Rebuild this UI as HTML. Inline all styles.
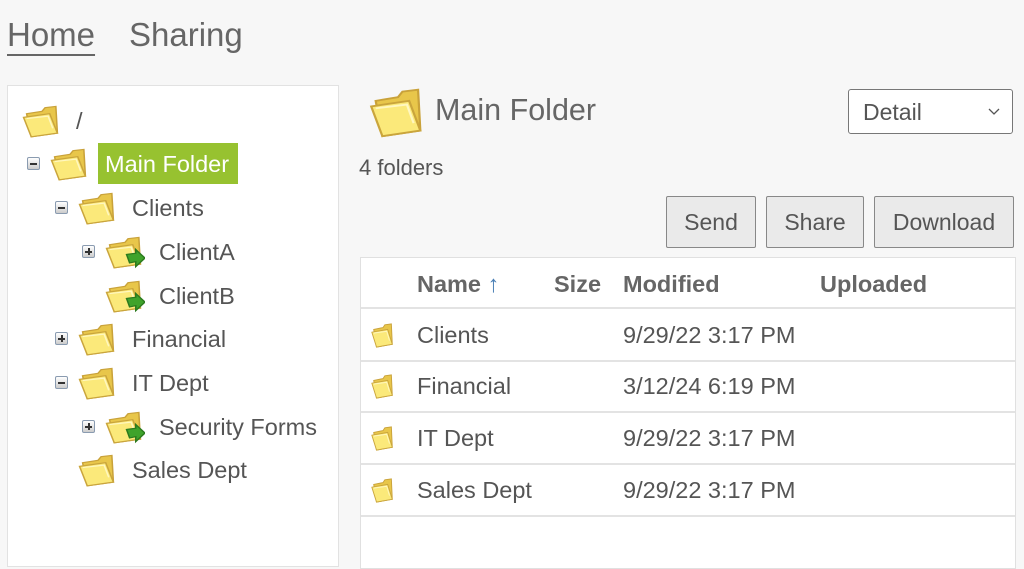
<!DOCTYPE html>
<html><head><style>
body{margin:0;width:1024px;height:557px;overflow:hidden;background:#f7f7f7;font-family:"Liberation Sans",sans-serif;color:#555;position:relative}
.a{position:absolute}
.nav{font-size:33px;color:#666;top:16px}
.tree{left:7px;top:85px;width:330px;height:480px;background:#fff;border:1px solid #e2e2e2}
.t{position:absolute;font-size:23.5px;color:#555}
.pm{position:absolute;width:11px;height:11px;border:1px solid #8a9bb0;background:linear-gradient(#fff,#ccc);border-radius:2px}
.pm:before{content:"";position:absolute;left:2px;top:5px;width:7px;height:2px;background:#333}
.pm.p:after{content:"";position:absolute;left:5px;top:2px;width:2px;height:7px;background:#333}
.btn{position:absolute;top:196px;height:52px;background:#eaeaea;border:1px solid #888;border-radius:2px;font-size:23px;color:#555;display:flex;align-items:center;justify-content:center;box-sizing:border-box}
.tbl{left:360px;top:257px;width:654px;height:310px;background:#fff;border:1px solid #e0e0e0}
.row{position:absolute;left:0;width:654px;height:51px;border-bottom:2px solid #e3e3e3;font-size:23.5px;color:#555}
.row span{position:absolute;top:13px}
</style></head><body>
<svg width="0" height="0" style="position:absolute"><defs>
<g id="f"><path d="M3 8 L13 6 L15 3 L22 2 L23 24 L6 27 Z" fill="#e8c64a" stroke="#c9a23a"/><path d="M1 11 L18 8 L23 24 L6 27 Z" fill="#fbe97a" stroke="#caa53c"/><path d="M3 12 L17 10 L20 20" fill="none" stroke="#fff7c0" stroke-width="1"/></g>
<g id="s"><path d="M14 16 L20 15 L20 12 L26 19 L20 26 L20 22 L16 23 Z" fill="#3fa32b" stroke="#2c7a1e"/></g>
</defs></svg>
<div class="a nav" style="left:7px;text-decoration:underline;text-decoration-thickness:2px;text-underline-offset:8px">Home</div>
<div class="a nav" style="left:129px">Sharing</div>

<div class="a tree">
<svg class="a" style="left:14px;top:18px" width="40" height="34" viewBox="0 0 26 28" preserveAspectRatio="none"><use href="#f"/></svg>
<div class="t" style="left:68px;top:22px">/</div>
<div class="pm" style="left:19px;top:71px"></div>
<svg class="a" style="left:42px;top:61px" width="40" height="34" viewBox="0 0 26 28" preserveAspectRatio="none"><use href="#f"/></svg>
<div class="a" style="left:90px;top:57px;width:140px;height:41px;background:#97c230"></div>
<div class="t" style="left:97px;top:65px;color:#fff">Main Folder</div>
<div class="pm" style="left:47px;top:115px"></div>
<svg class="a" style="left:70px;top:105px" width="40" height="34" viewBox="0 0 26 28" preserveAspectRatio="none"><use href="#f"/></svg>
<div class="t" style="left:124px;top:109px">Clients</div>
<div class="pm p" style="left:74px;top:159px"></div>
<svg class="a" style="left:97px;top:149px" width="40" height="34" viewBox="0 0 26 28" preserveAspectRatio="none"><use href="#f"/><use href="#s"/></svg>
<div class="t" style="left:151px;top:153px">ClientA</div>
<svg class="a" style="left:97px;top:193px" width="40" height="34" viewBox="0 0 26 28" preserveAspectRatio="none"><use href="#f"/><use href="#s"/></svg>
<div class="t" style="left:151px;top:197px">ClientB</div>
<div class="pm p" style="left:47px;top:246px"></div>
<svg class="a" style="left:70px;top:236px" width="40" height="34" viewBox="0 0 26 28" preserveAspectRatio="none"><use href="#f"/></svg>
<div class="t" style="left:124px;top:240px">Financial</div>
<div class="pm" style="left:47px;top:290px"></div>
<svg class="a" style="left:70px;top:280px" width="40" height="34" viewBox="0 0 26 28" preserveAspectRatio="none"><use href="#f"/></svg>
<div class="t" style="left:124px;top:284px">IT Dept</div>
<div class="pm p" style="left:74px;top:334px"></div>
<svg class="a" style="left:97px;top:324px" width="40" height="34" viewBox="0 0 26 28" preserveAspectRatio="none"><use href="#f"/><use href="#s"/></svg>
<div class="t" style="left:151px;top:328px">Security Forms</div>
<svg class="a" style="left:70px;top:367px" width="40" height="34" viewBox="0 0 26 28" preserveAspectRatio="none"><use href="#f"/></svg>
<div class="t" style="left:124px;top:371px">Sales Dept</div>
</div>

<svg class="a" style="left:369px;top:86px" width="58" height="52" viewBox="0 0 26 28" preserveAspectRatio="none"><use href="#f"/></svg>
<div class="a" style="left:435px;top:93px;font-size:30.5px;color:#666">Main Folder</div>
<div class="a" style="left:848px;top:89px;width:165px;height:45px;background:#fff;border:1px solid #777;border-radius:3px;box-sizing:border-box;font-size:23px;color:#555;padding:9px 14px">Detail<svg class="a" style="right:12px;top:18px" width="12" height="8" viewBox="0 0 12 8"><path d="M1 1 L6 6 L11 1" fill="none" stroke="#555" stroke-width="1.3"/></svg></div>
<div class="a" style="left:359px;top:155px;font-size:22px;color:#555">4 folders</div>
<div class="btn" style="left:666px;width:90px">Send</div>
<div class="btn" style="left:766px;width:98px">Share</div>
<div class="btn" style="left:874px;width:140px">Download</div>

<div class="a tbl">
<div class="row" style="top:0;height:49px;font-weight:bold;color:#666"><span style="left:56px">Name <span style="position:static;font-weight:normal;color:#4a7fb5">↑</span></span><span style="left:193px">Size</span><span style="left:262px">Modified</span><span style="left:459px">Uploaded</span></div>
<div class="row" style="top:51px"><svg class="a" style="left:9px;top:13px" width="26" height="26" viewBox="0 0 26 28"><use href="#f"/></svg><span style="left:56px">Clients</span><span style="left:262px">9/29/22 3:17 PM</span></div>
<div class="row" style="top:102px"><svg class="a" style="left:9px;top:13px" width="26" height="26" viewBox="0 0 26 28"><use href="#f"/></svg><span style="left:56px">Financial</span><span style="left:262px">3/12/24 6:19 PM</span></div>
<div class="row" style="top:154px"><svg class="a" style="left:9px;top:13px" width="26" height="26" viewBox="0 0 26 28"><use href="#f"/></svg><span style="left:56px">IT Dept</span><span style="left:262px">9/29/22 3:17 PM</span></div>
<div class="row" style="top:206px"><svg class="a" style="left:9px;top:13px" width="26" height="26" viewBox="0 0 26 28"><use href="#f"/></svg><span style="left:56px">Sales Dept</span><span style="left:262px">9/29/22 3:17 PM</span></div>
</div>
</body></html>
